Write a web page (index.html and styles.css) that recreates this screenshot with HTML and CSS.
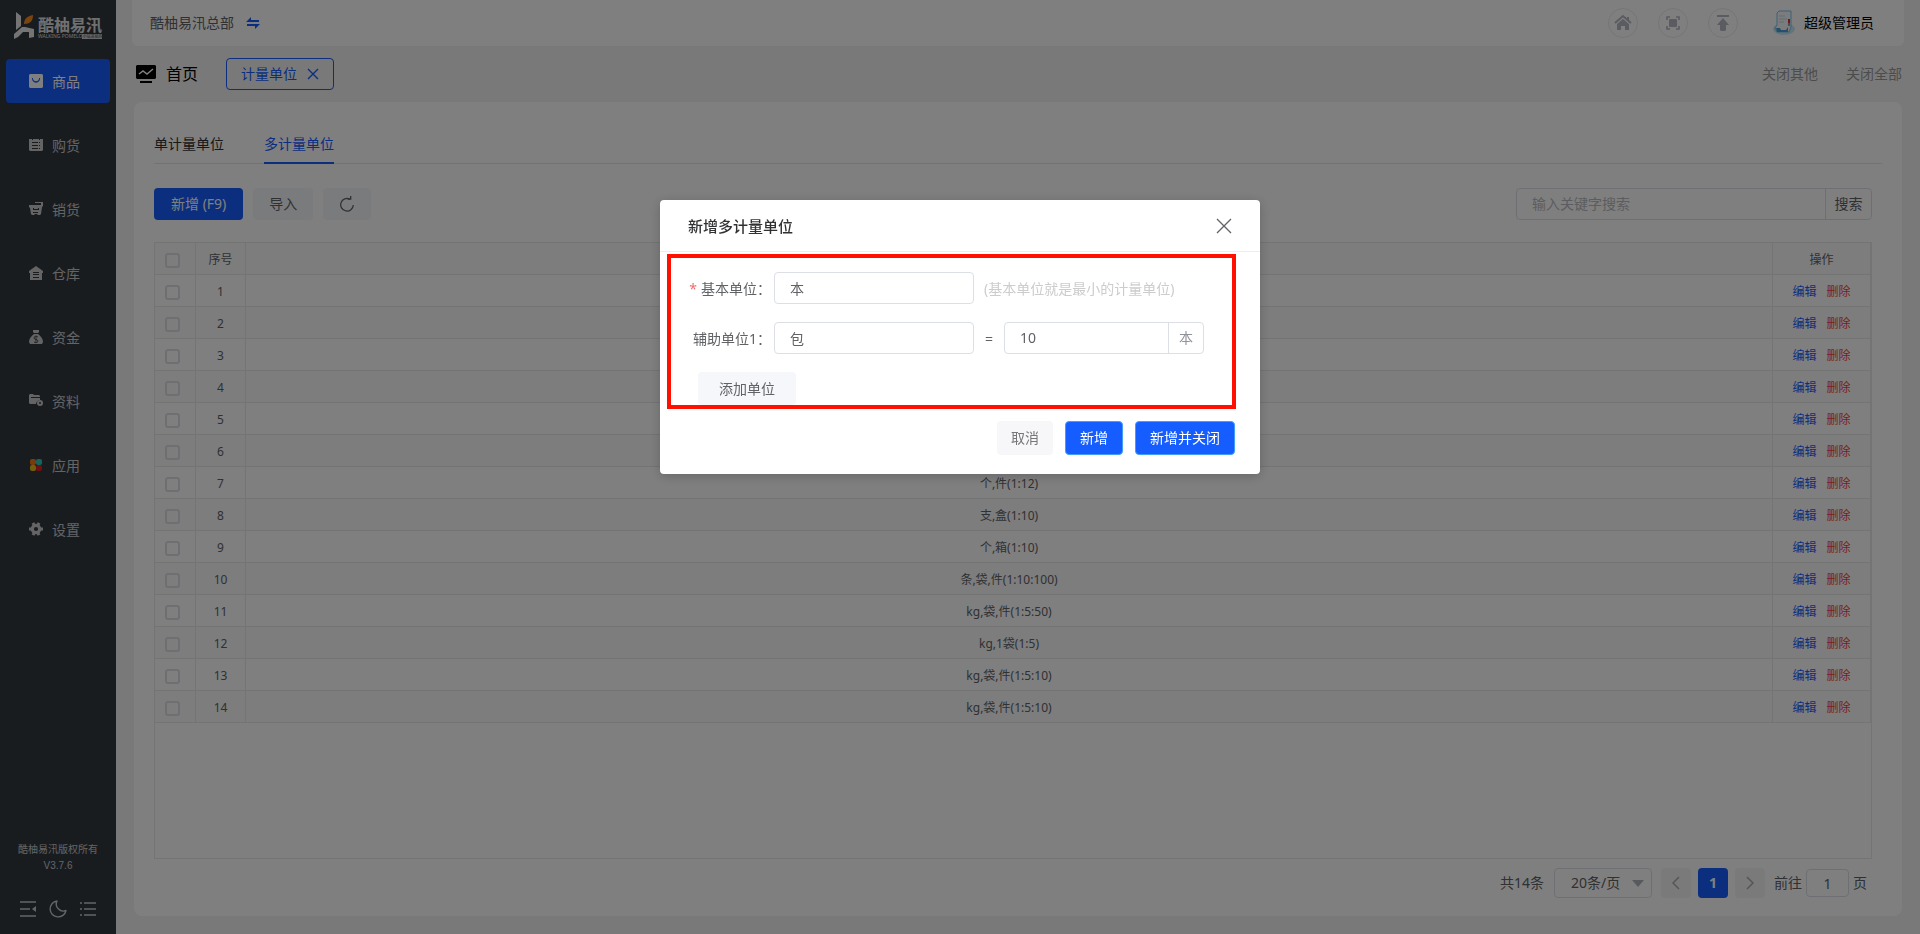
FILE: index.html
```html
<!DOCTYPE html>
<html lang="zh-CN">
<head>
<meta charset="UTF-8">
<meta name="viewport" content="width=device-width, initial-scale=1.0">
<title>计量单位</title>
<link rel="stylesheet" href="styles.css">
</head>
<body>
  <aside class="sidebar">
    <div class="logo">
      <svg width="20" height="27" viewBox="0 0 20 27">
        <path d="M2 0l5 4v10l-5 4z" fill="#e8e8e8"/>
        <path d="M10 12c0-5 3-8 9-9 0 6-3 9-9 9z" fill="#f58a1f"/>
        <path d="M0 27v-5l8-7h3l9 2v8l-5 1v-6H9l-5 5z" fill="#e8e8e8"/>
      </svg>
      <div class="logo-text">
        <strong>酷柚易汛</strong>
        <div class="logo-sub"><span>WALKING POMELO</span><em>小站进销存</em></div>
      </div>
    </div>
    <nav class="menu">
      <a href="#" class="menu-item active">
        <svg width="14" height="14" viewBox="0 0 14 14"><path fill="currentColor" fill-rule="evenodd" d="M1 0h12l1 1v12l-1 1H1l-1-1V1zM3 4v1c1 5 7 5 8 0V4h-1v1c-1 3-5 3-6 0V4z"/></svg>
        <span>商品</span>
      </a>
      <a href="#" class="menu-item">
        <svg width="14" height="14" viewBox="0 0 14 14"><path fill="currentColor" fill-rule="evenodd" d="M0 1h3v1h1V1h6v1h1V1h3v11l-1 1H1l-1-1zM3 4v1h6V4zm0 3v1h6V7zm0 3v1h6v-1zm7-6v1h1V4zm0 3v1h1V7zm0 3v1h1v-1z"/></svg>
        <span>购货</span>
      </a>
      <a href="#" class="menu-item">
        <svg width="14" height="14" viewBox="0 0 14 14"><path fill="currentColor" fill-rule="evenodd" d="M6 0h8v4l-1 1-1 7-1 1H9l-1-1H6l-1 1H3l-1-1-1-6-1-1V3h12V1H6zM4 6v2h6V6H9v1H5V6zM4 10v1h5v-1z"/></svg>
        <span>销货</span>
      </a>
      <a href="#" class="menu-item">
        <svg width="14" height="14" viewBox="0 0 14 14"><path fill="currentColor" fill-rule="evenodd" d="M7 0l7 5v2h-1v7H1V7H0V5zM4 6v1h6V6zm0 2v1h6V8zm0 3v1h6v-1z"/></svg>
        <span>仓库</span>
      </a>
      <a href="#" class="menu-item">
        <svg width="14" height="14" viewBox="0 0 14 14"><path fill="currentColor" d="M4 0h6v2L9 3H5L4 2zM5 4h4c3 2 5 5 5 8l-1 2H1l-1-2c0-3 2-6 5-8z"/><path d="M9 7C7 6 5 6 5 8s4 1 4 3-3 2-4 1M7 5.500v7.500" fill="none" stroke="#32383f" stroke-width=".8"/></svg>
        <span>资金</span>
      </a>
      <a href="#" class="menu-item">
        <svg width="14" height="14" viewBox="0 0 14 14"><path fill="currentColor" d="M0 1l1-1h3l1 1h5l1 1v1H2v1h9v2c-2 0-4 2-4 4H1l-1-1z"/><circle cx="11" cy="9" r="2" fill="none" stroke="currentColor" stroke-width="2"/></svg>
        <span>资料</span>
      </a>
      <a href="#" class="menu-item">
        <svg width="14" height="14" viewBox="0 0 14 14"><rect x="1" y="1" width="6" height="6" rx="2" fill="#f07818"/><rect x="7" y="1" width="6" height="6" rx="2" fill="#2cc8b8"/><rect x="1" y="7" width="6" height="6" rx="2" fill="#e8b818"/><rect x="7" y="7" width="6" height="6" rx="2" fill="#e02020"/></svg>
        <span>应用</span>
      </a>
      <a href="#" class="menu-item">
        <svg width="14" height="14" viewBox="0 0 14 14"><circle cx="7" cy="7" r="3.700" fill="none" stroke="currentColor" stroke-width="3.200"/><path d="M4 .8l1.500 3M10 .8l-1.500 3M0 7h3M14 7h-3M4 13.200l1.500-3M10 13.200l-1.500-3" stroke="currentColor" stroke-width="3"/></svg>
        <span>设置</span>
      </a>
    </nav>
    <div class="copyright">
      <div>酷柚易汛版权所有</div>
      <div>V3.7.6</div>
    </div>
    <div class="side-tools">
      <button type="button" aria-label="收起菜单"><svg width="18" height="18" viewBox="0 0 18 18"><path d="M1 2h16M1 9h10M1 16h16" stroke="currentColor" stroke-width="1.500"/><path d="M17 6v6l-4-3z" fill="currentColor"/></svg></button>
      <button type="button" aria-label="深色模式"><svg width="18" height="18" viewBox="0 0 18 18"><path d="M8 1a7 7 0 0 0 9 9.500A8 8 0 1 1 8 1z" fill="none" stroke="currentColor" stroke-width="1.400" stroke-linejoin="round"/></svg></button>
      <button type="button" aria-label="列表"><svg width="18" height="18" viewBox="0 0 18 18"><path d="M1 3h2M5 3h12M1 9h2M5 9h12M1 15h2M5 15h12" stroke="currentColor" stroke-width="1.700"/></svg></button>
    </div>
  </aside>

  <div class="main">
    <header class="topbar">
      <span class="company">酷柚易汛总部</span>
      <button type="button" class="swap" aria-label="切换"><svg width="14" height="12" viewBox="0 0 14 12"><path d="M0 5l5-5v3h8v2zM14 7l-5 5V9H1V7z" fill="currentColor"/></svg></button>
      <div class="top-actions">
        <button type="button" class="circle" aria-label="主页"><svg width="18" height="18" viewBox="0 0 18 18"><path d="M1 9l8-7 8 7" fill="none" stroke="currentColor" stroke-width="2"/><path d="M13 3h2v4l-2-2zM9 5l6 5v6h-4v-4H7v4H3v-6z" fill="currentColor"/></svg></button>
        <button type="button" class="circle" aria-label="全屏"><svg width="14" height="14" viewBox="0 0 14 14"><path d="M1 4V1h3M10 1h3v3M13 10v3h-3M4 13H1v-3" fill="none" stroke="currentColor" stroke-width="1.600"/><rect x="3" y="3" width="8" height="8" rx="1" fill="currentColor"/></svg></button>
        <button type="button" class="circle" aria-label="上传"><svg width="14" height="18" viewBox="0 0 14 18"><path d="M1 1h12v2H1zM7 4l6 7h-3v5l-1 1H5l-1-1v-5H1z" fill="currentColor"/></svg></button>
      </div>
      <svg class="avatar" width="24" height="26" viewBox="0 0 24 26"><ellipse cx="12" cy="19" rx="11" ry="6" fill="#c9e8f6"/><path d="M5 3l2-2h12v16l-2 5H5l-2-4 2-3z" fill="#f4f8fa" stroke="#7cc2e8" stroke-width="1"/><path d="M4 18h4l1 2h5l2-3v5H5z" fill="#4a9fd4"/><path d="M7 6h6M7 9h8M7 12h5" stroke="#c5dce6"/><path d="M17 9v4" stroke="#d33" stroke-width="2"/><path d="M17 13v3" stroke="#345" stroke-width="1"/></svg>
      <span class="user">超级管理员</span>
    </header>

    <div class="page-tabs">
      <a href="#" class="home-tab">
        <svg width="20" height="18" viewBox="0 0 20 18"><path d="M1 0h18l1 1v12l-1 1H1l-1-1V1zM4 16h12v2H4z" fill="#000"/><path d="M3 9l4-3 4 3 6-5" fill="none" stroke="#fff" stroke-width="1.500"/></svg>
        <span>首页</span>
      </a>
      <button type="button" class="page-tab">计量单位
        <svg width="12" height="12" viewBox="0 0 12 12"><path d="M1 1l10 10M11 1L1 11" stroke="currentColor" stroke-width="1.400"/></svg>
      </button>
      <a href="#" class="close-link push">关闭其他</a>
      <a href="#" class="close-link">关闭全部</a>
    </div>

    <section class="card">
      <div class="tabs">
        <button type="button" class="tab">单计量单位</button>
        <button type="button" class="tab active">多计量单位</button>
      </div>
      <div class="toolbar">
        <button type="button" class="btn btn-primary">新增 (F9)</button>
        <button type="button" class="btn btn-plain">导入</button>
        <button type="button" class="btn btn-plain" aria-label="刷新"><svg width="16" height="16" viewBox="0 0 16 16"><path d="M11 3.200A6.300 6.300 0 1 0 14.300 9" fill="none" stroke="currentColor" stroke-width="1.300"/><path d="M8.500 3.200h3.200V0" fill="none" stroke="currentColor" stroke-width="1.300"/></svg></button>
        <div class="search">
          <input type="text" placeholder="输入关键字搜索" aria-label="输入关键字搜索">
          <button type="button">搜索</button>
        </div>
      </div>

      <div class="table-box">
        <table class="unit-table">
          <thead>
            <tr><th class="col-check"><input type="checkbox" aria-label="全选"></th><th class="col-no">序号</th><th></th><th class="col-op">操作</th></tr>
          </thead>
          <tbody>
            <tr><td><input type="checkbox" aria-label="选择1"></td><td>1</td><td></td><td><a href="#" class="edit">编辑</a><a href="#" class="del">删除</a></td></tr>
            <tr><td><input type="checkbox" aria-label="选择2"></td><td>2</td><td></td><td><a href="#" class="edit">编辑</a><a href="#" class="del">删除</a></td></tr>
            <tr><td><input type="checkbox" aria-label="选择3"></td><td>3</td><td></td><td><a href="#" class="edit">编辑</a><a href="#" class="del">删除</a></td></tr>
            <tr><td><input type="checkbox" aria-label="选择4"></td><td>4</td><td></td><td><a href="#" class="edit">编辑</a><a href="#" class="del">删除</a></td></tr>
            <tr><td><input type="checkbox" aria-label="选择5"></td><td>5</td><td></td><td><a href="#" class="edit">编辑</a><a href="#" class="del">删除</a></td></tr>
            <tr><td><input type="checkbox" aria-label="选择6"></td><td>6</td><td></td><td><a href="#" class="edit">编辑</a><a href="#" class="del">删除</a></td></tr>
            <tr><td><input type="checkbox" aria-label="选择7"></td><td>7</td><td>个,件(1:12)</td><td><a href="#" class="edit">编辑</a><a href="#" class="del">删除</a></td></tr>
            <tr><td><input type="checkbox" aria-label="选择8"></td><td>8</td><td>支,盒(1:10)</td><td><a href="#" class="edit">编辑</a><a href="#" class="del">删除</a></td></tr>
            <tr><td><input type="checkbox" aria-label="选择9"></td><td>9</td><td>个,箱(1:10)</td><td><a href="#" class="edit">编辑</a><a href="#" class="del">删除</a></td></tr>
            <tr><td><input type="checkbox" aria-label="选择10"></td><td>10</td><td>条,袋,件(1:10:100)</td><td><a href="#" class="edit">编辑</a><a href="#" class="del">删除</a></td></tr>
            <tr><td><input type="checkbox" aria-label="选择11"></td><td>11</td><td>kg,袋,件(1:5:50)</td><td><a href="#" class="edit">编辑</a><a href="#" class="del">删除</a></td></tr>
            <tr><td><input type="checkbox" aria-label="选择12"></td><td>12</td><td>kg,1袋(1:5)</td><td><a href="#" class="edit">编辑</a><a href="#" class="del">删除</a></td></tr>
            <tr><td><input type="checkbox" aria-label="选择13"></td><td>13</td><td>kg,袋,件(1:5:10)</td><td><a href="#" class="edit">编辑</a><a href="#" class="del">删除</a></td></tr>
            <tr><td><input type="checkbox" aria-label="选择14"></td><td>14</td><td>kg,袋,件(1:5:10)</td><td><a href="#" class="edit">编辑</a><a href="#" class="del">删除</a></td></tr>
          </tbody>
        </table>
      </div>

      <div class="pagination">
        <span class="total">共14条</span>
        <div class="size-box">
          <select aria-label="每页条数"><option>20条/页</option></select>
          <svg width="12" height="7" viewBox="0 0 12 7"><path d="M0 0h12L6 7z" fill="currentColor"/></svg>
        </div>
        <button type="button" class="page-btn" aria-label="上一页"><svg width="8" height="14" viewBox="0 0 8 14"><path d="M7 1L1 7l6 6" fill="none" stroke="currentColor" stroke-width="1.500"/></svg></button>
        <button type="button" class="page-btn current">1</button>
        <button type="button" class="page-btn" aria-label="下一页"><svg width="8" height="14" viewBox="0 0 8 14"><path d="M1 1l6 6-6 6" fill="none" stroke="currentColor" stroke-width="1.500"/></svg></button>
        <label class="jump">前往<input type="text" value="1">页</label>
      </div>
    </section>
  </div>

  <div class="overlay">
    <div class="dialog" role="dialog" aria-labelledby="dialogTitle">
      <div class="dialog-header">
        <h2 id="dialogTitle">新增多计量单位</h2>
        <button type="button" class="dialog-close" aria-label="关闭"><svg width="16" height="16" viewBox="0 0 16 16"><path d="M1 1l14 14M15 1L1 15" stroke="currentColor" stroke-width="1.300"/></svg></button>
      </div>
      <form class="unit-form">
        <div class="form-row">
          <label for="baseUnit"><i>*</i>基本单位：</label>
          <input type="text" class="field" id="baseUnit" value="本">
          <span class="hint">(基本单位就是最小的计量单位)</span>
        </div>
        <div class="form-row">
          <label for="subUnit">辅助单位1：</label>
          <input type="text" class="field" id="subUnit" value="包">
          <span class="equal">=</span>
          <div class="field-group">
            <input type="text" value="10" aria-label="换算数量">
            <span>本</span>
          </div>
        </div>
        <button type="button" class="btn add-unit">添加单位</button>
      </form>
      <div class="dialog-footer">
        <button type="button" class="btn cancel">取消</button>
        <button type="button" class="btn confirm">新增</button>
        <button type="button" class="btn confirm">新增并关闭</button>
      </div>
    </div>
  </div>
</body>
</html>
```
FILE: styles.css
```css
* {
  box-sizing: border-box;
}
body {
  margin: 0;
  display: flex;
  min-height: 100vh;
  background: #f3f3f3;
  color: #606266;
  font-family: "Noto Sans", "Noto Sans CJK SC", sans-serif;
  font-size: 14px;
  line-height: 20px;
}
button, input, select {
  font: inherit;
  color: inherit;
}
button {
  border: none;
  background: none;
  padding: 0;
  cursor: pointer;
}
a {
  color: inherit;
  text-decoration: none;
}
svg {
  display: block;
  flex: none;
}

/* sidebar */
.sidebar {
  width: 116px;
  flex: none;
  display: flex;
  flex-direction: column;
  background: #32383f;
  color: #c8c9cb;
}
.logo {
  display: flex;
  gap: 4px;
  padding: 12px 14px 0;
  height: 59px;
}
.logo-text {
  padding-top: 4px;
  color: #e0e0e0;
}
.logo-text strong {
  display: block;
  font-size: 16px;
  line-height: 18px;
}
.logo-sub {
  display: flex;
  justify-content: space-between;
  font-size: 5px;
  line-height: 5px;
  white-space: nowrap;
}
.logo-sub em {
  font-style: normal;
  font-size: 4px;
  color: #32383f;
  background: #d0d0d0;
}
.menu {
  display: flex;
  flex-direction: column;
  gap: 20px;
  padding: 0 6px;
}
.menu-item {
  display: flex;
  align-items: center;
  height: 44px;
  padding-left: 23px;
  border-radius: 4px;
}
.menu-item svg {
  margin-right: 9px;
}
.menu-item span {
  padding-top: 2px;
}
.menu-item.active {
  background: #165dff;
  color: #fff;
}
.copyright {
  margin-top: auto;
  text-align: center;
  font-family: "Liberation Sans", "Noto Sans CJK SC", sans-serif;
  font-size: 10px;
  line-height: 16px;
}
.side-tools {
  display: flex;
  justify-content: center;
  gap: 12px;
  padding: 26px 0 16px;
}

/* top */
.main {
  flex: 1;
  min-width: 0;
  display: flex;
  flex-direction: column;
  padding: 0 16px 18px;
}
.topbar {
  display: flex;
  align-items: center;
  height: 46px;
  padding: 0 30px 0 18px;
  background: #fff;
  border-radius: 0 0 6px 6px;
}
.swap {
  margin-left: 12px;
  color: #165dff;
}
.top-actions {
  display: flex;
  gap: 20px;
  margin-left: auto;
}
.circle {
  display: flex;
  align-items: center;
  justify-content: center;
  width: 30px;
  height: 30px;
  border: 1px solid #ebebeb;
  border-radius: 50%;
  color: #b4b8c4;
}
.avatar {
  margin: 0 8px 0 34px;
}
.user {
  color: #000;
}
.page-tabs {
  display: flex;
  align-items: center;
  height: 56px;
  padding: 0 2px 0 4px;
}
.home-tab {
  display: flex;
  align-items: center;
  gap: 10px;
  margin-right: 28px;
  color: #000;
  font-size: 16px;
}
.page-tab {
  display: flex;
  align-items: center;
  gap: 10px;
  height: 32px;
  padding: 0 14px;
  border: 1px solid #165dff;
  border-radius: 4px;
  color: #165dff;
}
.close-link {
  margin-left: 28px;
  color: #999;
}
.close-link.push {
  margin-left: auto;
}

/* content card */
.card {
  flex: 1;
  display: flex;
  flex-direction: column;
  margin: 0 2px;
  padding: 22px 30px 18px 20px;
  background: #fff;
  border-radius: 8px;
}
.tabs {
  display: flex;
  gap: 40px;
  margin-right: -10px;
  height: 40px;
  border-bottom: 1px solid #e4e7ed;
}
.tab {
  height: 40px;
  padding-top: 2px;
  color: #303133;
  border-bottom: 2px solid transparent;
}
.tab.active {
  color: #165dff;
  border-color: #165dff;
}
.toolbar {
  display: flex;
  gap: 10px;
  margin: 24px 0 22px;
}
.btn {
  height: 32px;
  padding: 0 16px;
  border-radius: 4px;
}
.btn-primary {
  padding: 0 17px;
  background: #165dff;
  color: #fff;
}
.btn-plain {
  background: #f5f7fa;
}
.search {
  display: flex;
  width: 356px;
  margin-left: auto;
  border: 1px solid #dcdfe6;
  border-radius: 4px;
}
.search input {
  flex: 1;
  min-width: 0;
  padding: 0 15px;
  border: none;
  background: none;
}
.search input::placeholder {
  color: #b8bac0;
}
.search button {
  width: 46px;
  border-left: 1px solid #dcdfe6;
}
.table-box {
  flex: 1;
  border: 1px solid #e8e8e8;
}
.unit-table {
  width: 100%;
  table-layout: fixed;
  border-collapse: separate;
  border-spacing: 0;
  font-size: 12px;
  line-height: 18px;
  text-align: center;
}
.unit-table th, .unit-table td {
  height: 32px;
  padding: 2px 0 0;
  border-right: 1px solid #e8e8e8;
  border-bottom: 1px solid #e8e8e8;
  font-weight: normal;
}
.unit-table th, .unit-table tr:nth-child(even) td {
  background: #fafafa;
}
.unit-table .col-check {
  width: 41px;
}
.unit-table .col-no {
  width: 50px;
}
.unit-table .col-op {
  width: 98px;
}
.unit-table input {
  appearance: none;
  display: block;
  width: 15px;
  height: 15px;
  margin: 2px 0 0 10px;
  border: 2px solid #dcdfe6;
  border-radius: 3px;
}
.edit {
  color: #165dff;
}
.del {
  margin-left: 10px;
  color: #f53f3f;
}
.pagination {
  display: flex;
  align-items: center;
  justify-content: flex-end;
  height: 30px;
  margin-top: 9px;
  padding-right: 5px;
}
.size-box {
  display: grid;
  align-items: center;
  margin: 0 9px 0 10px;
}
.size-box select, .size-box svg {
  grid-area: 1 / 1;
}
.size-box select {
  appearance: none;
  width: 98px;
  height: 30px;
  padding: 0 16px;
  border: 1px solid #dcdfe6;
  border-radius: 4px;
  background: #fff;
}
.size-box svg {
  justify-self: end;
  margin-right: 8px;
  color: #b0b3ba;
  pointer-events: none;
}
.page-btn {
  display: flex;
  align-items: center;
  justify-content: center;
  width: 30px;
  height: 30px;
  border-radius: 4px;
  background: #f4f4f5;
  color: #a8abb2;
}
.page-btn.current {
  margin: 0 7px;
  background: #165dff;
  color: #fff;
  font-weight: bold;
}
.jump {
  display: flex;
  align-items: center;
  margin-left: 9px;
}
.jump input {
  width: 43px;
  height: 28px;
  margin: 0 4px;
  padding: 0;
  border: 1px solid #dcdfe6;
  border-radius: 4px;
  background: none;
  text-align: center;
}

/* dialog */
.overlay {
  position: fixed;
  inset: 0;
  padding: 200px 20px 20px;
  background: rgba(0, 0, 0, 0.5);
}
.dialog {
  max-width: 600px;
  margin: 0 auto;
  padding-bottom: 19px;
  background: #fff;
  border-radius: 4px;
  box-shadow: 0 2px 12px rgba(0, 0, 0, 0.2);
}
.dialog-header {
  display: flex;
  align-items: center;
  justify-content: space-between;
  height: 52px;
  padding: 0 28px;
  border-bottom: 1px solid #ebeef0;
}
.dialog-header h2 {
  margin: 0;
  color: #303133;
  font-size: 15px;
  font-weight: 500;
}
.dialog-close {
  color: #606266;
}
.unit-form {
  margin: 2px 24px 12px 7px;
  padding: 14px 16px 0 17px;
  border: 4px solid #ff1000;
}
.form-row {
  display: flex;
  align-items: center;
  margin-bottom: 18px;
}
.form-row label {
  width: 86px;
  padding: 2px 3px 0 0;
  text-align: right;
  white-space: nowrap;
}
.form-row label i {
  margin-right: 4px;
  color: #f56c6c;
  font-style: normal;
}
.field {
  width: 200px;
  height: 32px;
  padding: 0 15px;
  border: 1px solid #dcdfe6;
  border-radius: 4px;
}
.hint {
  margin-left: 10px;
  padding-top: 2px;
  color: #ccc;
}
.equal {
  width: 30px;
  padding-top: 2px;
  text-align: center;
}
.field-group {
  display: flex;
  width: 200px;
  height: 32px;
  border: 1px solid #dcdfe6;
  border-radius: 4px;
  line-height: 30px;
}
.field-group input {
  flex: 1;
  min-width: 0;
  padding: 0 15px;
  border: none;
  background: none;
}
.field-group span {
  width: 35px;
  border-left: 1px solid #dcdfe6;
  color: #909399;
  text-align: center;
}
.add-unit {
  display: block;
  height: 33px;
  margin-left: 10px;
  padding: 0 21px;
  background: #f5f7fa;
}
.dialog-footer {
  display: flex;
  justify-content: flex-end;
  gap: 12px;
  padding-right: 25px;
}
.dialog-footer .btn {
  height: 34px;
  padding: 0 14px;
}
.cancel {
  background: #f7f7f9;
  color: #777;
}
.dialog-footer .confirm {
  border: 1px solid #409eff;
  background: #165dff;
  color: #fff;
}
```
